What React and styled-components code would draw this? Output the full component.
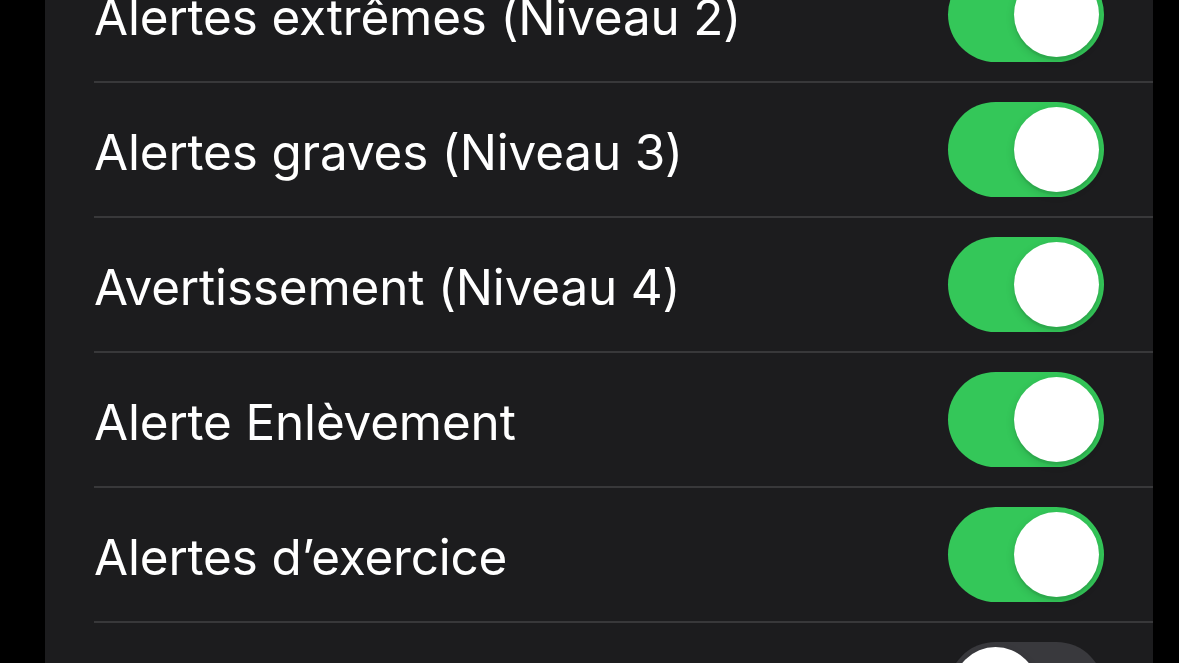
import React from 'react'
import styled, { createGlobalStyle } from 'styled-components'

const GlobalStyle = createGlobalStyle`
  html, body {
    margin: 0;
    padding: 0;
    background: #000;
    overflow: hidden;
  }
  body {
    font-family: Inter, "Noto Sans", "Liberation Sans", sans-serif;
    -webkit-font-smoothing: antialiased;
  }
`

const Screen = styled.div`
  width: 1179px;
  height: 663px;
  overflow: hidden;
  background: #000;
`

const Panel = styled.div`
  margin: -52px 26px 0 45px;
  background: #1c1c1e;
`

const Row = styled.div`
  display: flex;
  align-items: center;
  justify-content: space-between;
  height: 133px;
  margin-left: 49px;
  padding-right: 49px;
  border-bottom: 2px solid ${p => (p.last ? 'transparent' : '#38383a')};
`

const Label = styled.span`
  color: #fff;
  font-size: 49.4px;
  letter-spacing: -0.15px;
  padding-top: 4px;
`

const Track = styled.div`
  display: flex;
  justify-content: ${p => (p.on ? 'flex-end' : 'flex-start')};
  align-items: center;
  width: 156px;
  height: 95px;
  padding: 0 5px;
  box-sizing: border-box;
  border-radius: 48px;
  background: ${p => (p.on ? '#34c759' : '#39393d')};
`

const Knob = styled.div`
  width: 85px;
  height: 85px;
  border-radius: 50%;
  background: #fff;
  box-shadow: 0 3px 8px rgba(0, 0, 0, 0.15), 0 3px 1px rgba(0, 0, 0, 0.06);
`

// the last row sits below the fold; only its switch shows
const rows = [
  { label: 'Alertes extrêmes (Niveau 2)', on: true },
  { label: 'Alertes graves (Niveau 3)', on: true },
  { label: 'Avertissement (Niveau 4)', on: true },
  { label: 'Alerte Enlèvement', on: true },
  { label: 'Alertes d’exercice', on: true },
  { label: '', on: false },
]

const Toggle = ({ on }) => (
  <Track on={on ? 1 : 0}>
    <Knob />
  </Track>
)

export default function App() {
  return (
    <Screen>
      <GlobalStyle />
      <Panel>
        {rows.map((r, i) => (
          <Row key={i} last={i === rows.length - 1 ? 1 : 0}>
            <Label>{r.label}</Label>
            <Toggle on={r.on} />
          </Row>
        ))}
      </Panel>
    </Screen>
  )
}
